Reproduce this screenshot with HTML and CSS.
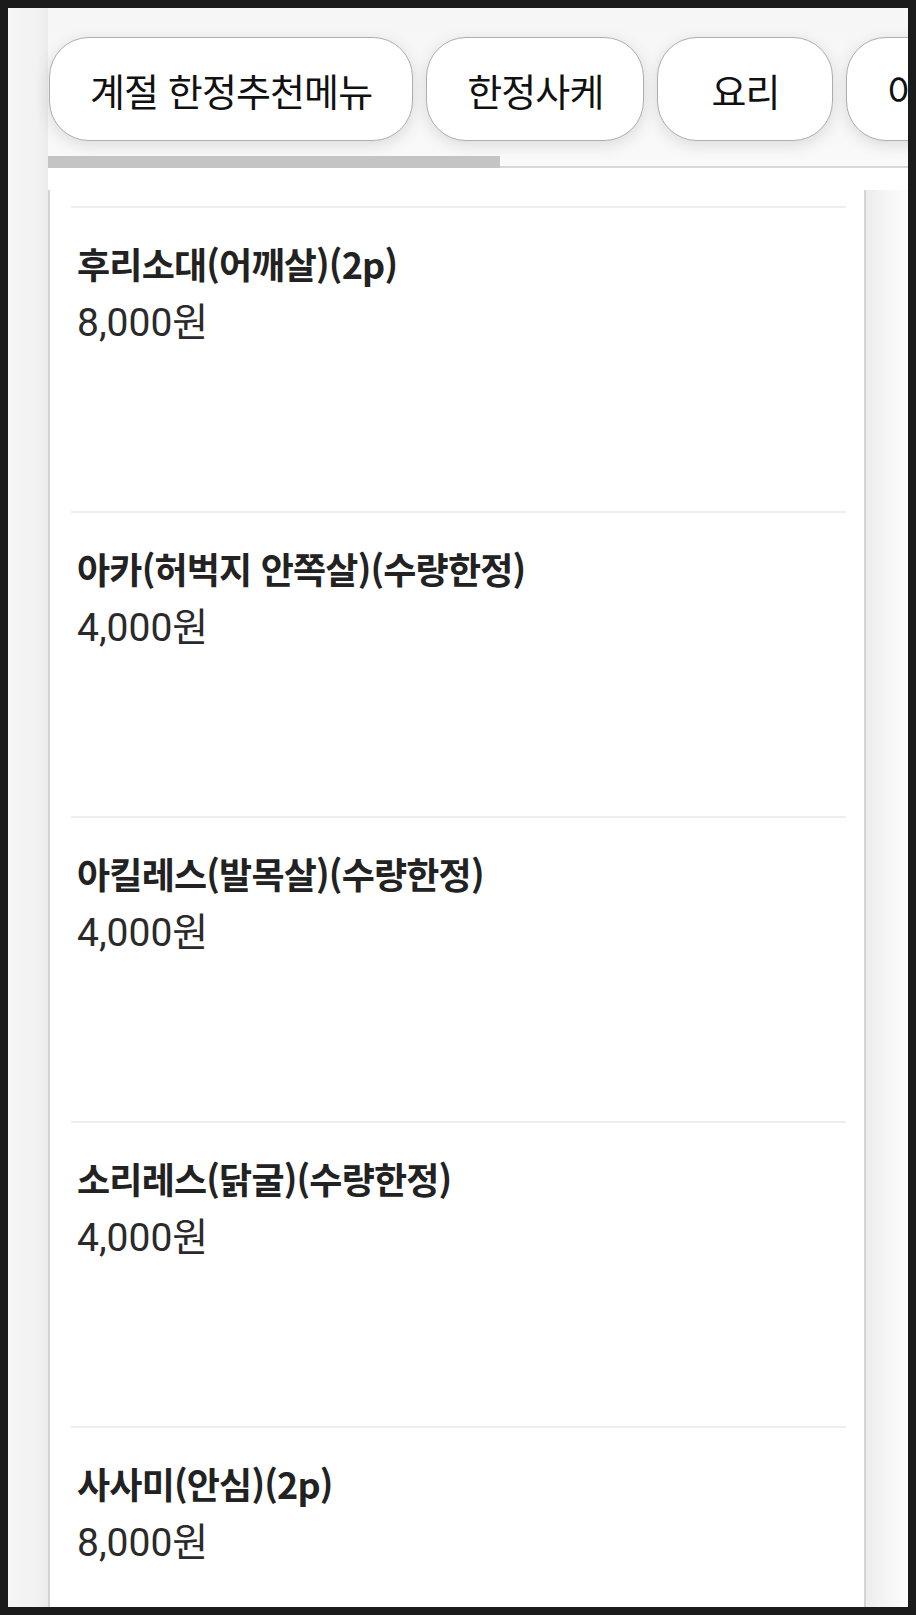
FILE: index.html
```html
<!DOCTYPE html>
<html lang="ko">
<head>
<meta charset="utf-8">
<title>메뉴</title>
<link rel="stylesheet" href="styles.css">
</head>
<body>
<div class="screen">
  <div class="lgutter"></div>
  <div class="main">
    <div class="tabbar">
      <div class="tabs">
        <div class="pill">계절 한정추천메뉴</div>
        <div class="pill">한정사케</div>
        <div class="pill">요리</div>
        <div class="pill">아게모노</div>
      </div>
      <div class="track"><div class="thumb"></div></div>
    </div>
    <div class="below">
      <div class="row">
        <div class="card">
          <div class="item">
            <div class="name">후리소대(어깨살)(2p)</div>
            <div class="price">8,000원</div>
          </div>
          <div class="item">
            <div class="name">아카(허벅지 안쪽살)(수량한정)</div>
            <div class="price">4,000원</div>
          </div>
          <div class="item">
            <div class="name">아킬레스(발목살)(수량한정)</div>
            <div class="price">4,000원</div>
          </div>
          <div class="item">
            <div class="name">소리레스(닭굴)(수량한정)</div>
            <div class="price">4,000원</div>
          </div>
          <div class="item">
            <div class="name">사사미(안심)(2p)</div>
            <div class="price">8,000원</div>
          </div>
        </div>
        <div class="rgutter"></div>
      </div>
    </div>
  </div>
</div>
</body>
</html>
```

FILE: styles.css
```css
html, body {
  margin: 0;
  padding: 0;
  background: #1b1b1b;
}
body {
  font-family: "Noto Sans CJK KR", "Noto Sans", sans-serif;
  color: #111;
}
.screen {
  margin: 8px;
  width: 900px;
  height: 1599px;
  overflow: hidden;
  display: flex;
  background: #f6f6f6;
}
.lgutter {
  width: 40px;
  flex: none;
  background: linear-gradient(to right, #f6f6f6, #f2f2f2 70%, #ececec);
}
.main {
  flex: 1;
  min-width: 0;
  display: flex;
  flex-direction: column;
}
.tabbar {
  height: 160px;
  padding-top: 29px;
  box-sizing: border-box;
  background: linear-gradient(to bottom, #f6f6f6, #f9f9f9);
  display: flex;
  flex-direction: column;
}
.tabs {
  display: flex;
  gap: 13px;
  height: 104px;
  padding-left: 1px;
}
.pill {
  flex: none;
  height: 104px;
  box-sizing: border-box;
  padding: 0 40px;
  min-width: 176px;
  border: 1.5px solid #aeaeae;
  border-radius: 40px;
  background: #fff;
  box-shadow: 0 4px 16px rgba(0, 0, 0, 0.12);
  display: flex;
  align-items: center;
  justify-content: center;
  font-size: 38px;
  letter-spacing: -0.9px;
  color: #111;
  white-space: nowrap;
}
.track {
  margin-top: 15px;
  height: 12px;
  box-shadow: inset 0 -2px 0 #d8d8d8;
}
.thumb {
  width: 452px;
  height: 12px;
  background: #c4c4c4;
}
.below {
  flex: 1;
  background: #fff;
  padding-top: 22px;
  display: flex;
  flex-direction: column;
}
.row {
  flex: 1;
  display: flex;
}
.card {
  width: 818px;
  flex: none;
  box-sizing: border-box;
  border-left: 2px solid #d4d4d4;
  border-right: 2px solid #d4d4d4;
  background: #fff;
  padding-top: 16px;
}
.rgutter {
  flex: 1;
  background: linear-gradient(to right, #ececec, #f6f6f6 50%, #fcfcfc);
}
.item {
  margin: 0 18px 0 21px;
  height: 305px;
  box-sizing: border-box;
  border-top: 2px solid #eeeeee;
  padding: 27px 0 0 6px;
}
.name {
  font-size: 36px;
  font-weight: 700;
  line-height: 57px;
  color: #222;
  letter-spacing: -0.8px;
}
.price {
  font-family: Roboto, "Noto Sans CJK KR", sans-serif;
  font-size: 39px;
  font-weight: 400;
  line-height: 57px;
  padding-top: 3px;
  color: #2a2a2a;
}
```
